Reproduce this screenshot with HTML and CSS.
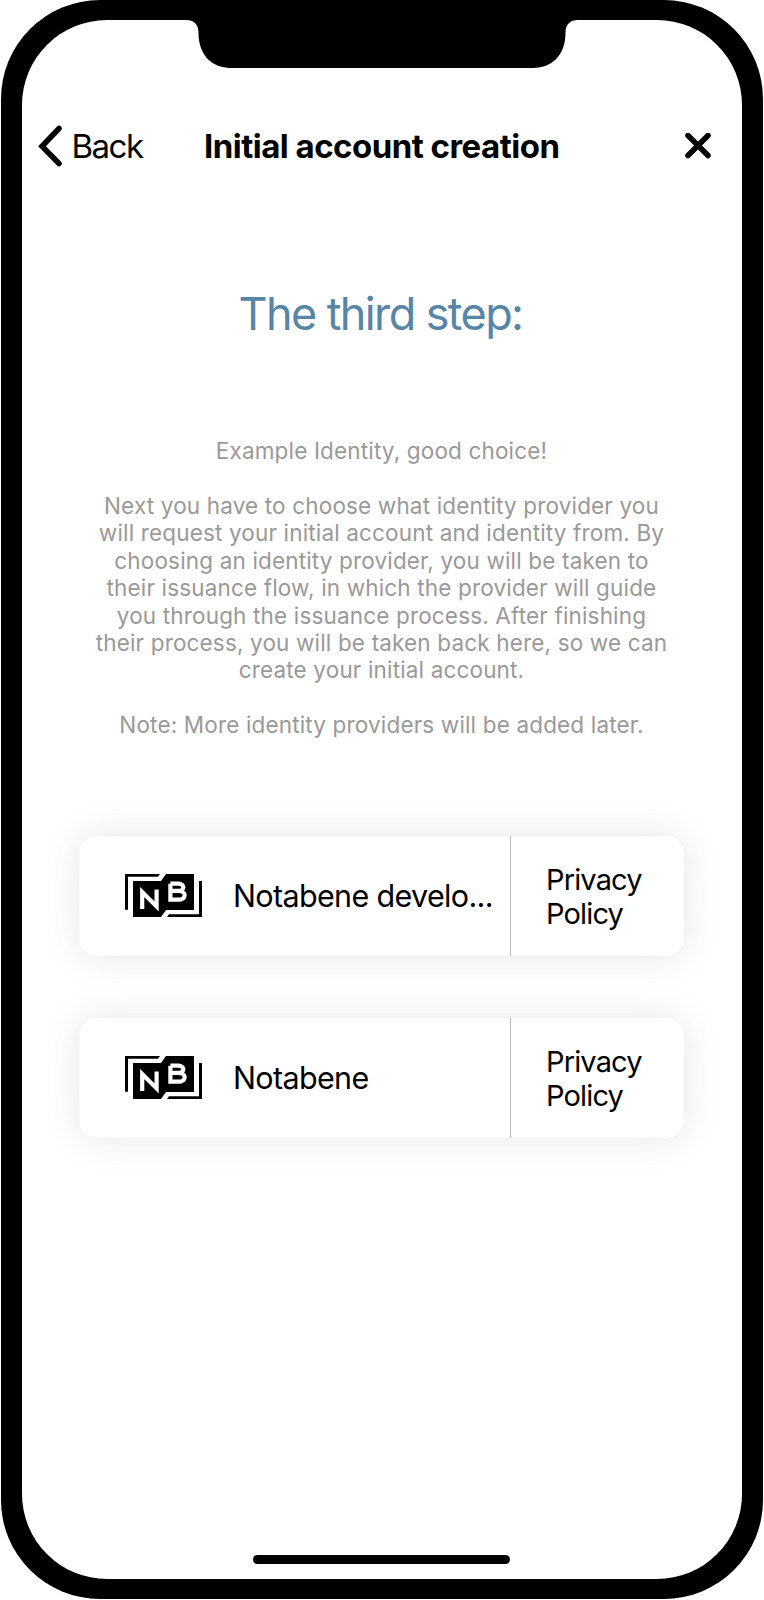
FILE: index.html
```html
<!DOCTYPE html>
<html lang="en">
<head>
<meta charset="utf-8">
<title>Initial account creation</title>
<link rel="stylesheet" href="styles.css">
</head>
<body>
<svg class="symbols" aria-hidden="true">
  <symbol id="logo" viewBox="0 0 77 43">
    <path d="M0 0H35L33 2.7H3V35.7H0Z"/>
    <path d="M8 7H36L41 0H69V36H41L36 43H8Z"/>
    <path d="M74 7H77V43H42L44 40.3H74Z"/>
    <path class="cut" d="M17.200 35V18L31.600 32.500V15.500"/>
    <path class="cut" d="M45.400 9.700H53.500C60 9.700 60 16.900 53.500 16.900H45.400M53.500 16.900C61.700 16.900 61.700 25.700 53.500 25.700H45.400V9.700"/>
  </symbol>
</svg>
<div class="phone">
  <main class="screen">
    <svg class="notch" width="392" height="48" viewBox="0 0 392 48">
      <path d="M0 0C8 0 12.500 4 12.500 13C12.500 34 25 48 45 48H347C367 48 379.500 34 379.500 13C379.500 4 384 0 392 0Z"/>
    </svg>
    <header class="nav">
      <a class="back">
        <svg width="26" height="42" viewBox="0 0 26 42"><path d="M22 3.500L5 21.300L22 38.500"/></svg>
        <span>Back</span>
      </a>
      <h1 class="title">Initial account creation</h1>
      <svg class="close" width="26" height="26" viewBox="0 0 26 26"><path d="M3 2.500L23 22.500M23 2.500L3 22.500"/></svg>
    </header>
    <h2 class="heading">The third step:</h2>
    <p class="copy">Example Identity, good choice!<br><br>Next you have to choose what identity provider you<br>will request your initial account and identity from. By<br>choosing an identity provider, you will be taken to<br>their issuance flow, in which the provider will guide<br>you through the issuance process. After finishing<br>their process, you will be taken back here, so we can<br>create your initial account.<br><br>Note: More identity providers will be added later.</p>
    <section class="providers">
      <article class="card">
        <div class="provider">
          <svg class="logo" width="77" height="43"><use href="#logo"/></svg>
          <span class="name">Notabene develo...</span>
        </div>
        <a class="policy">Privacy<br>Policy</a>
      </article>
      <article class="card">
        <div class="provider">
          <svg class="logo" width="77" height="43"><use href="#logo"/></svg>
          <span class="name">Notabene</span>
        </div>
        <a class="policy">Privacy<br>Policy</a>
      </article>
    </section>
    <div class="home"></div>
  </main>
</div>
</body>
</html>
```
FILE: styles.css
```css
* { box-sizing: border-box; }
body { margin: 0; background: #fff; color: #000; font-family: Inter, "Liberation Sans", sans-serif; }
h1, h2, p { margin: 0; font-weight: 400; }
.symbols { position: absolute; width: 0; height: 0; }
.phone { width: 762.600px; height: 1599px; margin: 0.400px 0 0 0.700px; padding: 20px 21.300px 20px 21.300px; background: #000; border-radius: 99px; }
.screen { position: relative; display: flex; flex-direction: column; height: 100%; background: #fff; border-radius: 85px; }
.notch { position: absolute; left: 164px; top: 0; }
.nav { display: flex; align-items: center; height: 50px; margin-top: 101px; padding: 0 31px 0 15.500px; }
.back { display: flex; align-items: center; gap: 8px; width: 166.500px; font-size: 33px; letter-spacing: -1.500px; }
.back svg, .close { fill: none; stroke: #000; stroke-width: 5.500; stroke-linecap: round; }
.title { flex: 1; font-size: 33px; font-weight: 700; letter-spacing: -0.520px; white-space: nowrap; }
.heading { margin-top: 114.500px; padding-right: 3px; height: 56px; line-height: 56px; text-align: center; color: #5685a8; font-size: 45px; letter-spacing: -1.600px; }
.copy { margin-top: 95px; padding-right: 1px; text-align: center; color: #999; font-size: 22.500px; line-height: 27.430px; letter-spacing: 0.160px; white-space: nowrap; }
.providers { display: flex; flex-direction: column; gap: 61.700px; margin: 97px 58px 0 57px; }
.card { display: flex; height: 120.300px; background: #fff; border-radius: 18px; box-shadow: 0 0 36px rgba(70, 65, 60, 0.13); }
.provider { display: flex; align-items: center; gap: 31px; width: 432.500px; padding: 0 0 1px 46px; border-right: 1.500px solid #bbb; }
.name { font-size: 30.500px; letter-spacing: -0.650px; white-space: nowrap; }
.cut { fill: none; stroke: #fff; stroke-width: 4.200; }
.policy { padding: 27px 0 0 34.500px; font-size: 29px; line-height: 34px; letter-spacing: -0.850px; }
.home { align-self: center; width: 257px; height: 9.500px; margin: auto 0 15px; border-radius: 5px; background: #000; }
```
